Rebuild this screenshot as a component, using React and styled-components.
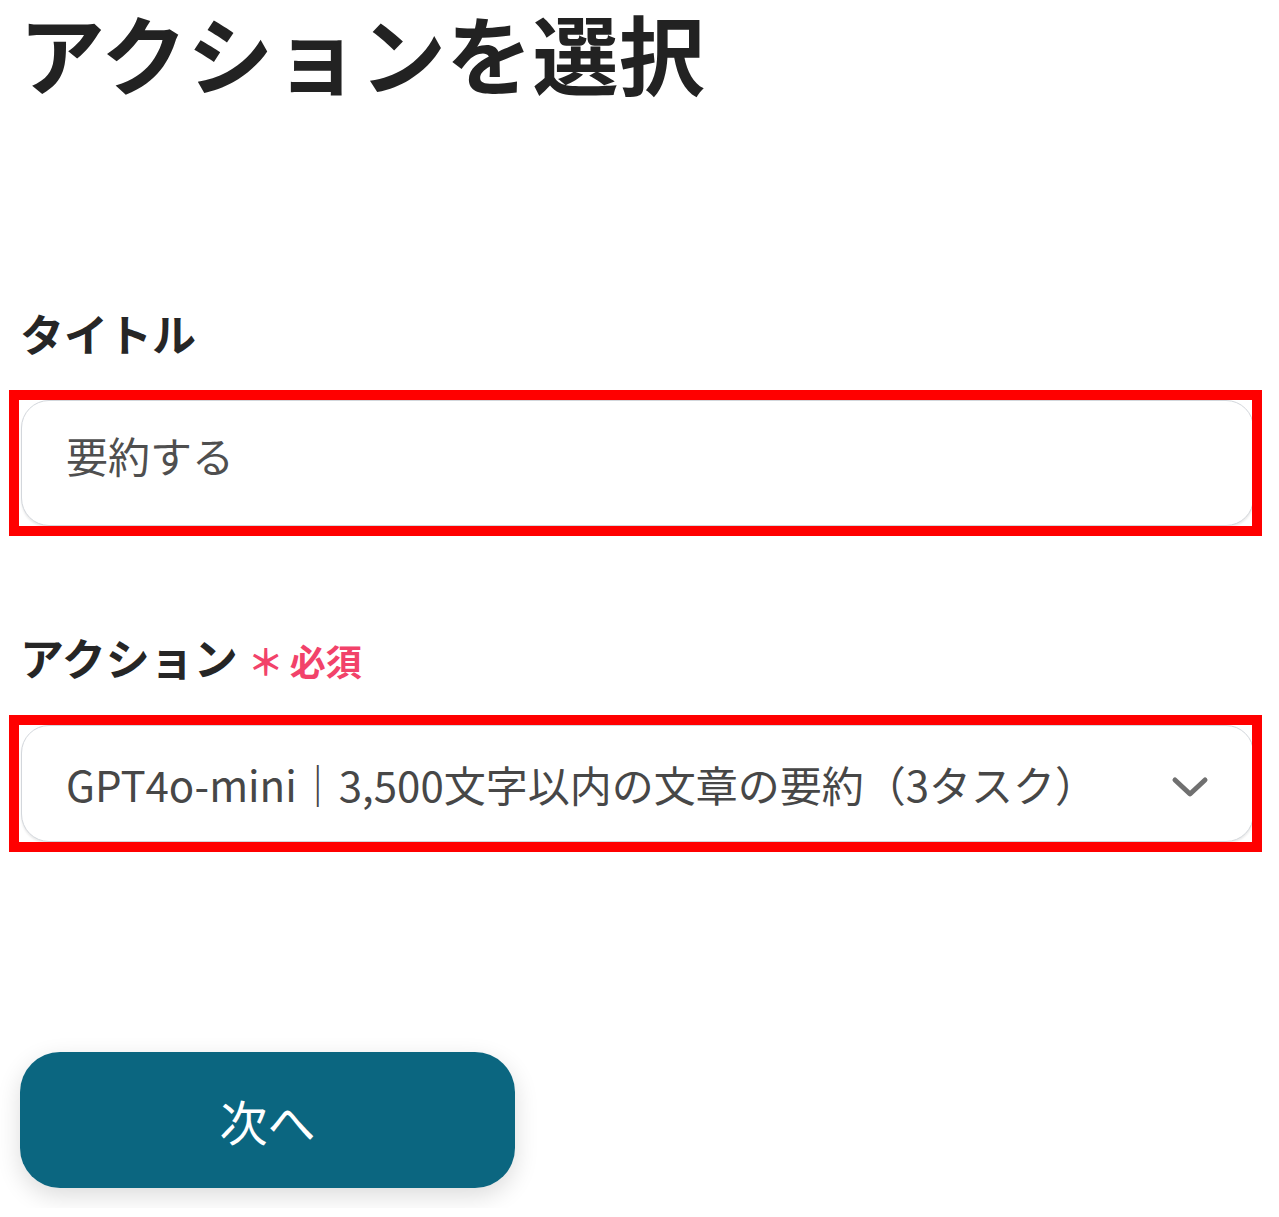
import React from 'react';
import styled, { createGlobalStyle } from 'styled-components';

const GlobalStyle = createGlobalStyle`
    body {
        margin: 0;
        background: #ffffff;
        font-family: "Noto Sans CJK JP", "Noto Sans", sans-serif;
    }
`;

const Page = styled.main`
    padding: 0 17px 20px 9px;
`;

const Title = styled.h1`
    margin: 0 0 0 10px;
    font-size: 86px;
    line-height: 1.22;
    font-weight: 700;
    color: #222222;
    letter-spacing: 0.3px;
    white-space: nowrap;
`;

const Field = styled.section`
    margin-top: ${(p) => p.$top}px;
`;

const Label = styled.h2`
    margin: 0 0 ${(p) => p.$gap}px 11px;
    font-size: 44px;
    line-height: 1;
    font-weight: 700;
    color: #262626;
    display: flex;
    align-items: baseline;
`;

const Required = styled.span`
    margin-left: 10px;
    font-size: 36px;
    font-weight: 700;
    color: #f2426a;
`;

const Star = styled.span`
    margin-right: 6px;
`;

const Highlight = styled.div`
    border: 10px solid #ff0000;
    height: ${(p) => p.$h}px;
    box-sizing: content-box;
    overflow: hidden;
`;

const Box = styled.div`
    height: 100%;
    margin-left: 2px;
    margin-right: -2px;
    box-sizing: border-box;
    border: 1.5px solid #d3d7dc;
    border-radius: 28px;
    box-shadow: 0 2px 2px rgba(0, 0, 0, 0.08);
    background: #ffffff;
    display: flex;
    align-items: center;
    padding: 0 40px ${(p) => p.$lift || 0}px 44px;
    font-size: 42px;
    color: ${(p) => p.$color};
`;

const Value = styled.span`
    flex: 1;
    white-space: nowrap;
`;

const Chevron = styled.svg`
    width: 38px;
    height: 24px;
    margin: 8px 4px 0 0;
`;

const Button = styled.button`
    margin: 200px 0 0 11px;
    width: 495px;
    height: 136px;
    border: none;
    border-radius: 40px;
    background: #0b6680;
    color: #ffffff;
    font-family: inherit;
    font-size: 48px;
    box-shadow: 0 8px 24px rgba(0, 0, 0, 0.14);
`;

export default function App() {
    return (
        <Page>
            <GlobalStyle />
            <Title>アクションを選択</Title>
            <Field $top={206}>
                <Label $gap={35}>タイトル</Label>
                <Highlight $h={126}>
                    <Box $color="#4f4f4f" $lift={16}>
                        <Value>要約する</Value>
                    </Box>
                </Highlight>
            </Field>
            <Field $top={99}>
                <Label $gap={36}>
                    アクション
                    <Required><Star>＊</Star>必須</Required>
                </Label>
                <Highlight $h={117}>
                    <Box $color="#474747">
                        <Value>GPT4o-mini｜3,500文字以内の文章の要約（3タスク）</Value>
                        <Chevron viewBox="0 0 38 24" fill="none">
                            <path d="M4 5 L19 19 L34 5" stroke="#707070" strokeWidth="5" strokeLinecap="round" strokeLinejoin="round" />
                        </Chevron>
                    </Box>
                </Highlight>
            </Field>
            <Button>次へ</Button>
        </Page>
    );
}
